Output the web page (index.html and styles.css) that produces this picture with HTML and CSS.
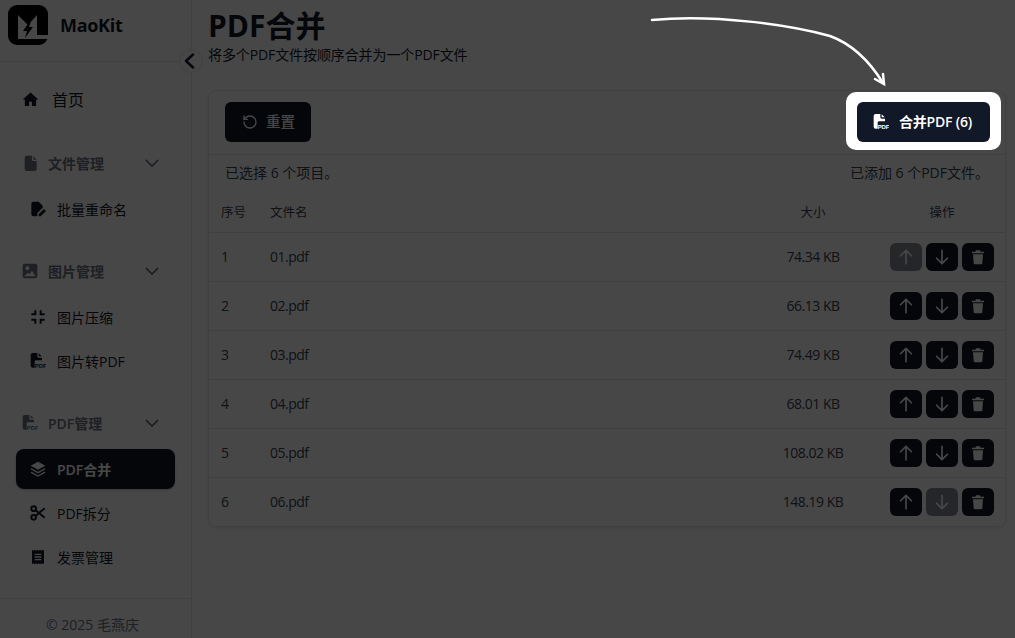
FILE: index.html
```html
<!DOCTYPE html>
<html lang="zh-CN">
<head>
    <meta charset="UTF-8">
    <meta name="viewport" content="width=device-width, initial-scale=1.0">
    <title>PDF合并 - MaoKit</title>
    <link rel="stylesheet" href="styles.css">
</head>
<body>
    <svg class="sprite" width="0" height="0">
        <symbol id="i-file" viewBox="0 0 24 24"><path d="M7 1h8v6a2 2 0 0 0 2 2h5v12a3 3 0 0 1-3 3H7a3 3 0 0 1-3-3V4a3 3 0 0 1 3-3zM17 1.500 21.500 7H17z"/></symbol>
        <symbol id="i-up" viewBox="0 0 24 24"><path class="line" d="M12 20V4M5.500 10.500 12 4l6.500 6.500"/></symbol>
        <symbol id="i-down" viewBox="0 0 24 24"><path class="line" d="M12 4v16M5.500 13.500 12 20l6.500-6.500"/></symbol>
        <symbol id="i-trash" viewBox="0 0 24 24"><path d="M9 2h6l1 2h5v2.500H3V4h5zM4.500 8h15l-1 13a2 2 0 0 1-2 2h-9a2 2 0 0 1-2-2z"/></symbol>
        <symbol id="i-chevron" viewBox="0 0 16 10"><path class="line" d="M1.500 1.500 8 8l6.500-6.500"/></symbol>
    </svg>

    <div class="app">
        <aside class="sidebar">
            <div class="brand">
                <svg class="logo" viewBox="0 0 40 40">
                    <rect width="40" height="40" rx="9" fill="#000"/>
                    <path fill="#fff" d="M10 10 20 20 29 10V30H40V34H10z"/>
                    <path fill="#000" d="M22 16 15 26H19L17 33 25 22H21L23 16z"/>
                </svg>
                <span class="brand-name">MaoKit</span>
            </div>
            <button class="collapse-btn">
                <svg viewBox="0 0 12 16"><path class="line" d="M10 1.500 3 8l7 6.500"/></svg>
            </button>

            <nav class="nav">
                <a class="home-link">
                    <svg class="icon-home" viewBox="0 0 24 24"><path d="M10 21v-6h4v6h6v-9h3L12 2 1 12h3v9z"/></svg>
                    首页
                </a>

                <div class="group-title">
                    <svg class="icon-group"><use href="#i-file"/></svg>
                    <span>文件管理</span>
                    <svg class="chevron"><use href="#i-chevron"/></svg>
                </div>
                <a class="nav-item">
                    <svg class="icon" viewBox="0 0 24 24"><path d="M5 1h8l6 6v3l-8 8v5H5a3 3 0 0 1-3-3V4a3 3 0 0 1 3-3z"/><path d="M13 23v-3l8-8 3 3-8 8z"/></svg>
                    批量重命名
                </a>

                <div class="group-title">
                    <svg class="icon-group" viewBox="0 0 24 24"><path d="M4 1h16a3 3 0 0 1 3 3v16a3 3 0 0 1-3 3H4a3 3 0 0 1-3-3V4a3 3 0 0 1 3-3zM8 5a3 3 0 1 0 0 6 3 3 0 0 0 0-6zM3.500 20h17l-5.500-8.500-4 5.500-2.500-2.500z" fill-rule="evenodd"/></svg>
                    <span>图片管理</span>
                    <svg class="chevron"><use href="#i-chevron"/></svg>
                </div>
                <a class="nav-item">
                    <svg class="icon" viewBox="0 0 24 24"><path class="line thick" d="M8 2v6H2M16 2v6h6M8 22v-6H2M16 22v-6h6"/></svg>
                    图片压缩
                </a>
                <a class="nav-item">
                    <svg class="icon" viewBox="0 0 24 24"><path d="M4 0h7v5a2 2 0 0 0 2 2h5v4H9a2 2 0 0 0-2 2v9H4a3 3 0 0 1-3-3V3a3 3 0 0 1 3-3zM13 .5 17.500 5H13z"/><text x="7" y="22" class="pdf-mark">PDF</text></svg>
                    图片转PDF
                </a>

                <div class="group-title">
                    <svg class="icon-group icon-group-pdf" viewBox="0 0 24 24"><path d="M4 0h7v5a2 2 0 0 0 2 2h5v4H9a2 2 0 0 0-2 2v9H4a3 3 0 0 1-3-3V3a3 3 0 0 1 3-3zM13 .5 17.500 5H13z"/><text x="7" y="22" class="pdf-mark">PDF</text></svg>
                    <span>PDF管理</span>
                    <svg class="chevron"><use href="#i-chevron"/></svg>
                </div>
                <a class="nav-item active">
                    <svg class="icon" viewBox="0 0 24 24"><path d="M12 1 23 7l-11 6L1 7z"/><path class="line" d="M2 12l10 5.500L22 12M2 17l10 5.500L22 17"/></svg>
                    PDF合并
                </a>
                <a class="nav-item">
                    <svg class="icon" viewBox="0 0 24 24"><circle class="line thick" cx="5.500" cy="5.500" r="3.500"/><circle class="line thick" cx="5.500" cy="18.500" r="3.500"/><path class="line thick" d="M8.500 8 22 19M8.500 16 22 5"/></svg>
                    PDF拆分
                </a>
                <a class="nav-item">
                    <svg class="icon" viewBox="0 0 24 24"><path fill-rule="evenodd" d="M3 1l2 1.500L7 1l2 1.500L11 1l2 1.500L15 1l2 1.500L19 1l2 1.500v19L19 23l-2-1.500L15 23l-2-1.500L11 23l-2-1.500L7 23l-2-1.500L3 23zM7 7v2h10V7zM7 11v2h10v-2zM7 15v2h10v-2z"/></svg>
                    发票管理
                </a>
            </nav>

            <div class="sidebar-footer">© 2025 毛燕庆</div>
        </aside>

        <main class="main">
            <h1 class="page-title">PDF合并</h1>
            <p class="page-desc">将多个PDF文件按顺序合并为一个PDF文件</p>

            <section class="card">
                <div class="toolbar">
                    <button class="btn btn-reset">
                        <svg class="btn-icon" viewBox="0 0 24 24"><path class="line" d="M3 12a9 9 0 1 0 9-9 9.750 9.750 0 0 0-6.740 2.740L3 8"/><path class="line" d="M3 3v5h5"/></svg>
                        <span class="btn-label">重置</span>
                    </button>
                    <button class="btn btn-merge">
                        <svg class="btn-icon" viewBox="0 0 24 24"><path d="M4 0h7v5a2 2 0 0 0 2 2h5v4H9a2 2 0 0 0-2 2v9H4a3 3 0 0 1-3-3V3a3 3 0 0 1 3-3zM13 .5 17.500 5H13z"/><text x="7" y="22" class="pdf-mark">PDF</text></svg>
                        <span class="btn-label">合并PDF (6)</span>
                    </button>
                </div>

                <div class="summary">
                    <span>已选择 6 个项目。</span>
                    <span>已添加 6 个PDF文件。</span>
                </div>

                <table class="file-table">
                    <colgroup>
                        <col class="col-num"><col><col class="col-size"><col class="col-actions">
                    </colgroup>
                    <thead>
                        <tr><th>序号</th><th>文件名</th><th class="center">大小</th><th class="center">操作</th></tr>
                    </thead>
                    <tbody>
                        <tr>
                            <td>1</td><td>01.pdf</td><td class="center">74.34 KB</td>
                            <td><div class="row-actions">
                                <button class="icon-btn" disabled><svg><use href="#i-up"/></svg></button>
                                <button class="icon-btn"><svg><use href="#i-down"/></svg></button>
                                <button class="icon-btn"><svg class="trash"><use href="#i-trash"/></svg></button>
                            </div></td>
                        </tr>
                        <tr>
                            <td>2</td><td>02.pdf</td><td class="center">66.13 KB</td>
                            <td><div class="row-actions">
                                <button class="icon-btn"><svg><use href="#i-up"/></svg></button>
                                <button class="icon-btn"><svg><use href="#i-down"/></svg></button>
                                <button class="icon-btn"><svg class="trash"><use href="#i-trash"/></svg></button>
                            </div></td>
                        </tr>
                        <tr>
                            <td>3</td><td>03.pdf</td><td class="center">74.49 KB</td>
                            <td><div class="row-actions">
                                <button class="icon-btn"><svg><use href="#i-up"/></svg></button>
                                <button class="icon-btn"><svg><use href="#i-down"/></svg></button>
                                <button class="icon-btn"><svg class="trash"><use href="#i-trash"/></svg></button>
                            </div></td>
                        </tr>
                        <tr>
                            <td>4</td><td>04.pdf</td><td class="center">68.01 KB</td>
                            <td><div class="row-actions">
                                <button class="icon-btn"><svg><use href="#i-up"/></svg></button>
                                <button class="icon-btn"><svg><use href="#i-down"/></svg></button>
                                <button class="icon-btn"><svg class="trash"><use href="#i-trash"/></svg></button>
                            </div></td>
                        </tr>
                        <tr>
                            <td>5</td><td>05.pdf</td><td class="center">108.02 KB</td>
                            <td><div class="row-actions">
                                <button class="icon-btn"><svg><use href="#i-up"/></svg></button>
                                <button class="icon-btn"><svg><use href="#i-down"/></svg></button>
                                <button class="icon-btn"><svg class="trash"><use href="#i-trash"/></svg></button>
                            </div></td>
                        </tr>
                        <tr>
                            <td>6</td><td>06.pdf</td><td class="center">148.19 KB</td>
                            <td><div class="row-actions">
                                <button class="icon-btn"><svg><use href="#i-up"/></svg></button>
                                <button class="icon-btn" disabled><svg><use href="#i-down"/></svg></button>
                                <button class="icon-btn"><svg class="trash"><use href="#i-trash"/></svg></button>
                            </div></td>
                        </tr>
                    </tbody>
                </table>
            </section>
        </main>
    </div>

    <!-- tour overlay: the hole's shadow dims everything else -->
    <div class="tour-hole"></div>
    <svg class="tour-arrow" viewBox="0 0 1015 638">
        <path d="M652 20C715 14 790 25 830 36C852 44 870 62 883 83"/>
        <path d="M875 79 884 84 883 74"/>
    </svg>
</body>
</html>
```

FILE: styles.css
```css
* {
    box-sizing: border-box;
}
html, body {
    height: 100%;
}
body {
    margin: 0;
    overflow: hidden;
    background-color: #fff;
    color: #111827;
    font-family: "Open Sans", "Noto Sans CJK SC", sans-serif;
    font-size: 14px;
}
.sprite {
    position: absolute;
}
svg {
    fill: currentColor;
}
.line {
    fill: none;
    stroke: currentColor;
    stroke-width: 2;
    stroke-linecap: round;
    stroke-linejoin: round;
}
.line.thick {
    stroke-width: 3;
    stroke-linecap: butt;
    stroke-linejoin: miter;
}
.pdf-mark {
    font-family: "Liberation Sans", sans-serif;
    font-size: 9px;
    font-weight: 700;
}
.app {
    display: flex;
    height: 638px;
}

/* sidebar */
.sidebar {
    position: relative;
    display: flex;
    flex-direction: column;
    flex: 0 0 192px;
    border-right: 1px solid #e5e7eb;
}
.brand {
    display: flex;
    align-items: center;
    gap: 12px;
    height: 62px;
    padding: 0 8px 12px;
    border-bottom: 1px solid #e5e7eb;
}
.logo {
    width: 40px;
    height: 40px;
}
.brand-name {
    font-size: 18px;
    font-weight: 700;
    letter-spacing: -0.3px;
}
.collapse-btn {
    position: absolute;
    top: 49px;
    right: -12px;
    display: flex;
    align-items: center;
    justify-content: center;
    width: 24px;
    height: 24px;
    padding: 0 4px 0 0;
    border: 1px solid #e5e7eb;
    border-radius: 50%;
    background-color: #fff;
    color: #111827;
}
.collapse-btn svg {
    width: 12px;
    height: 16px;
}
.collapse-btn .line {
    stroke-width: 2.500;
}
.nav {
    display: flex;
    flex-direction: column;
    padding: 17px 16px 0;
}
.home-link {
    display: flex;
    align-items: center;
    gap: 13px;
    height: 40px;
    padding-left: 6px;
    margin-bottom: 24px;
    font-size: 16px;
}
.icon-home {
    width: 17px;
    height: 17px;
}
.group-title {
    display: flex;
    align-items: center;
    height: 40px;
    padding-left: 6px;
    margin-bottom: 6px;
    color: #6b7280;
    font-weight: 600;
}
.nav-item + .group-title {
    margin-top: 18px;
}
.group-title span {
    flex: 1;
    margin-left: 10px;
}
.icon-group {
    flex: none;
    width: 16px;
    height: 16px;
}
.icon-group-pdf {
    height: 18px;
}
.chevron {
    width: 14px;
    height: 9px;
    margin-right: 16px;
}
.nav-item {
    display: flex;
    align-items: center;
    gap: 11px;
    height: 40px;
    padding-left: 14px;
    border-radius: 8px;
    margin-bottom: 4px;
}
.nav-item.active {
    background-color: #111827;
    color: #fff;
    font-weight: 600;
    box-shadow: 0 1px 3px rgba(0, 0, 0, 0.2);
}
.icon {
    flex: none;
    width: 16px;
    height: 16px;
}
.sidebar-footer {
    margin-top: auto;
    height: 40px;
    padding: 16px 6px 0 0;
    border-top: 1px solid #e5e7eb;
    color: #6b7280;
    line-height: 20px;
    text-align: center;
}

/* main */
.main {
    flex: 1;
    padding: 0 9px 0 16px;
}
.page-title {
    margin: 4px 0 0;
    font-size: 30px;
    font-weight: 700;
    line-height: 44px;
}
.page-desc {
    margin: 0 0 28px;
    color: #111827;
    font-size: 14px;
    line-height: 14px;
    letter-spacing: -0.1px;
}
.card {
    border: 1px solid #e5e7eb;
    border-radius: 8px;
    box-shadow: 0 1px 3px rgba(0, 0, 0, 0.1);
    overflow: hidden;
}
.toolbar {
    display: flex;
    align-items: center;
    justify-content: space-between;
    height: 64px;
    padding: 0 15px 2px 16px;
    border-bottom: 1px solid #e5e7eb;
}
.btn {
    display: flex;
    align-items: center;
    gap: 8px;
    height: 40px;
    padding: 0 16px;
    border: none;
    border-radius: 6px;
    background-color: #111827;
    color: #fff;
    font-family: inherit;
    font-size: 14px;
    font-weight: 500;
}
.btn-label {
    margin-top: -2px;
}
.btn-reset {
    padding-left: 17px;
    font-size: 14.500px;
}
.btn-merge {
    gap: 10px;
    padding-right: 18px;
    font-weight: 600;
    letter-spacing: -0.2px;
}
.btn-icon {
    width: 16px;
    height: 16px;
}
.summary {
    display: flex;
    justify-content: space-between;
    height: 36px;
    padding: 8px 16px 0 16px;
    color: #374151;
    line-height: 20px;
}
.file-table {
    width: 100%;
    border-collapse: collapse;
    table-layout: fixed;
    color: #374151;
}
.col-num {
    width: 49px;
}
.col-size {
    width: 132px;
}
.col-actions {
    width: 126px;
}
.file-table th {
    height: 41px;
    padding: 0 12px;
    font-size: 12.500px;
    font-weight: 400;
    text-align: left;
}
.file-table td {
    height: 49px;
    padding: 0 12px;
    border-top: 1px solid #e5e7eb;
    font-size: 14px;
    letter-spacing: -0.035em;
}
.file-table th.center, .file-table td.center {
    text-align: center;
}
.row-actions {
    display: flex;
    justify-content: center;
    gap: 4px;
}
.icon-btn {
    display: flex;
    flex: none;
    align-items: center;
    justify-content: center;
    width: 32px;
    height: 28px;
    padding: 0;
    border: none;
    border-radius: 6px;
    background-color: #111827;
    color: #fff;
}
.icon-btn svg {
    width: 20px;
    height: 20px;
}
.icon-btn svg.trash {
    width: 16px;
    height: 16px;
}
.icon-btn:disabled {
    opacity: 0.5;
}

/* tour overlay */
.tour-hole {
    position: absolute;
    left: 846px;
    top: 92px;
    width: 155px;
    height: 58px;
    border-radius: 10px;
    box-shadow: 0 0 0 2000px rgba(0, 0, 0, 0.72);
}
.tour-arrow {
    position: absolute;
    left: 0;
    top: 0;
    width: 1015px;
    height: 638px;
    pointer-events: none;
}
.tour-arrow path {
    fill: none;
    stroke: #fff;
    stroke-width: 2.500;
    stroke-linecap: round;
}
```
